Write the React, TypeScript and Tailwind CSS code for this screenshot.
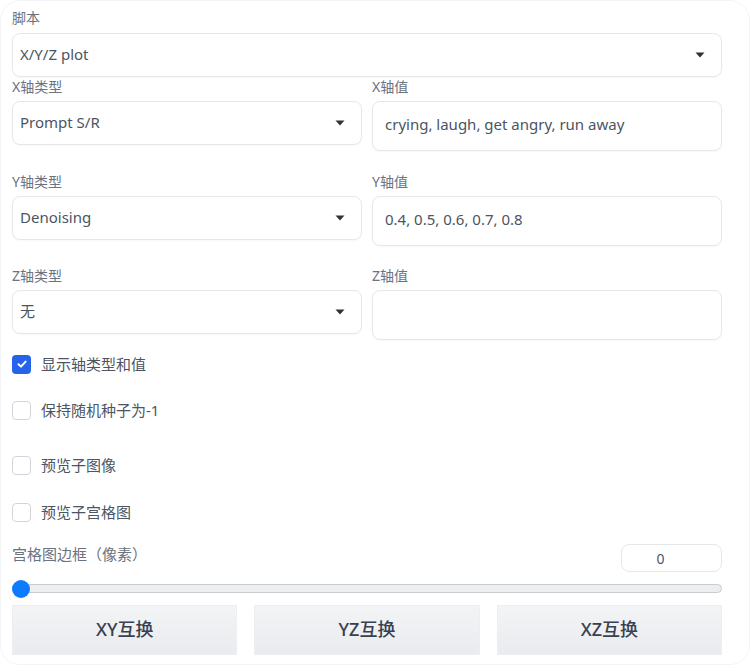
import React from "react";

const font = { fontFamily: '"Noto Sans", "Noto Sans CJK SC", sans-serif' };

function Caret() {
  return (
    <svg width="10" height="6" viewBox="0 0 10 6" className="shrink-0">
      <path d="M0.5 0.5 L9.5 0.5 L5 5.5 Z" fill="#333" />
    </svg>
  );
}

function Select({ value, h = "h-[44px]" }: { value: string; h?: string }) {
  return (
    <div className={`${h} flex items-center justify-between rounded-[8px] border border-[#e5e7eb] bg-white pl-[7px] pr-[16px] shadow-[0_1px_2px_rgba(0,0,0,0.03)]`}>
      <span className="text-[15px] text-[#4b5563] -mt-[2px]">{value}</span>
      <Caret />
    </div>
  );
}

function TextBox({ value }: { value: string }) {
  return (
    <div className="h-[50px] flex items-center rounded-[8px] border border-[#e5e7eb] bg-white px-[12px] shadow-[0_1px_2px_rgba(0,0,0,0.03)]">
      <span className="text-[15px] text-[#4b5563] -mt-[3px]">{value}</span>
    </div>
  );
}

function Label({ children }: { children: React.ReactNode }) {
  return <div className="h-[20px] leading-[20px] text-[14px] text-[#6b7280] mb-[4px]">{children}</div>;
}

function Check({ checked, label }: { checked?: boolean; label: string }) {
  return (
    <div className="flex items-center gap-[10px] h-[20px]">
      {checked ? (
        <div className="w-[19px] h-[19px] rounded-[4px] bg-[#2563eb] flex items-center justify-center">
          <svg width="12" height="12" viewBox="0 0 12 12">
            <path d="M2.5 6.2 L5 8.6 L9.6 3.6" stroke="white" strokeWidth="2" fill="none" strokeLinecap="round" strokeLinejoin="round" />
          </svg>
        </div>
      ) : (
        <div className="w-[19px] h-[19px] rounded-[4px] border border-[#d1d5db] bg-white" />
      )}
      <span className="text-[15px] text-[#4b5563]">{label}</span>
    </div>
  );
}

function Btn({ label }: { label: string }) {
  return (
    <div className="h-[50px] flex items-center justify-center bg-gradient-to-b from-[#f3f4f6] to-[#e9ebee] border border-[#eceef1] text-[18px] font-medium text-[#374151]">
      {label}
    </div>
  );
}

export default function App() {
  return (
    <div style={font} className="w-[750px] h-[665px] bg-white rounded-[20px] border border-[#f3f4f6] overflow-hidden">
      <div className="w-[710px] ml-[11px] pt-[7px]">
        <div className="h-[20px] leading-[20px] text-[14px] text-[#6b7280] mb-[5px]">脚本</div>
        <Select value="X/Y/Z plot" h="h-[44px]" />

        <div className="grid grid-cols-2 gap-x-[10px]">
          <div>
            <Label>X轴类型</Label>
            <Select value="Prompt S/R" />
          </div>
          <div>
            <Label>X轴值</Label>
            <TextBox value="crying, laugh, get angry, run away" />
          </div>
        </div>

        <div className="grid grid-cols-2 gap-x-[10px] mt-[21px]">
          <div>
            <Label>Y轴类型</Label>
            <Select value="Denoising" />
          </div>
          <div>
            <Label>Y轴值</Label>
            <TextBox value="0.4, 0.5, 0.6, 0.7, 0.8" />
          </div>
        </div>

        <div className="grid grid-cols-2 gap-x-[10px] mt-[20px]">
          <div>
            <Label>Z轴类型</Label>
            <Select value="无" />
          </div>
          <div>
            <Label>Z轴值</Label>
            <TextBox value="" />
          </div>
        </div>

        <div className="mt-[14px] flex flex-col">
          <Check checked label="显示轴类型和值" />
          <div className="mt-[26px]"><Check label="保持随机种子为-1" /></div>
          <div className="mt-[35px]"><Check label="预览子图像" /></div>
          <div className="mt-[27px]"><Check label="预览子宫格图" /></div>
        </div>

        <div className="mt-[21px] flex items-center justify-between">
          <span className="text-[15px] text-[#6b7280] mb-[8px]">宫格图边框（像素）</span>
          <div className="w-[101px] h-[28px] rounded-[8px] border border-[#e5e7eb] bg-white flex items-center justify-center pr-[22px] text-[14px] text-[#4b5563]">0</div>
        </div>

        <div className="relative h-[20px] mt-[5px] flex items-center">
          <div className="w-full h-[9px] rounded-full bg-[#eceef0] border border-[#c8cbd0]" />
          <div className="absolute left-0 top-[1px] w-[18px] h-[18px] rounded-full bg-[#0b7bff]" />
        </div>

        <div className="grid grid-cols-3 gap-x-[17px] mt-[6px]">
          <Btn label="XY互换" />
          <Btn label="YZ互换" />
          <Btn label="XZ互换" />
        </div>
      </div>
    </div>
  );
}
